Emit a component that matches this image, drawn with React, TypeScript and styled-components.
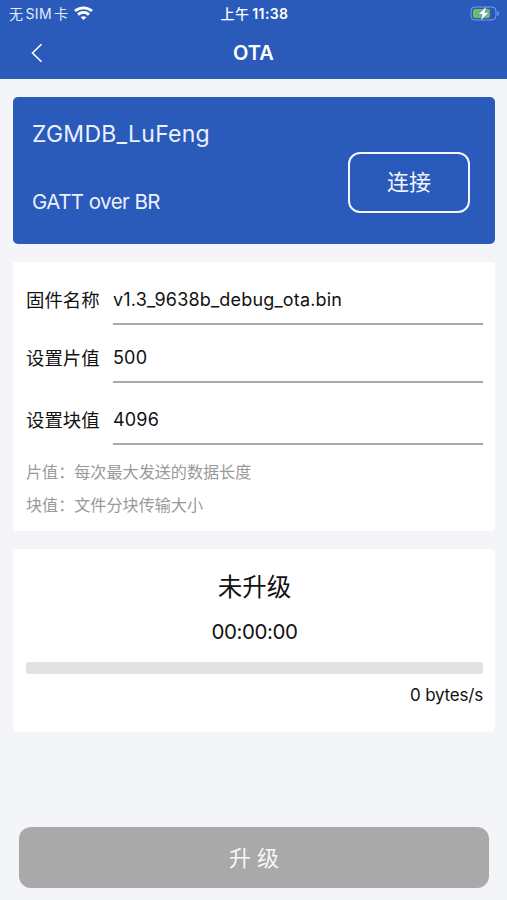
import React from "react";
import styled, { createGlobalStyle } from "styled-components";

const GlobalStyle = createGlobalStyle`
  * { box-sizing: border-box; }
  body {
    margin: 0;
    background: #f3f5f9;
    font-family: Inter, "Noto Sans CJK SC", sans-serif;
    color: #111;
  }
`;

const Screen = styled.div`
  display: flex;
  flex-direction: column;
  width: 507px;
  height: 900px;
  overflow: hidden;
  background: #f3f5f9;
`;

const Header = styled.header`
  height: 79px;
  flex: none;
  background: #2a5aba;
  color: #fff;
`;

const StatusBar = styled.div`
  display: grid;
  grid-template-columns: 1fr auto 1fr;
  align-items: center;
  height: 27px;
  padding: 0 7px 0 9px;
  font-size: 14px;
  line-height: 27px;
`;

const Carrier = styled.div`
  display: flex;
  align-items: center;
  gap: 6px;
  color: #e3ebfa;
  letter-spacing: 0.3px;
  word-spacing: -2px;
`;

const Clock = styled.div`
  font-weight: 600;
  font-size: 14px;
  letter-spacing: 0.4px;
  word-spacing: -1px;
`;

const Meridiem = styled.span`
  font-weight: 500;
`;

const BatteryIcon = styled.svg`
  justify-self: end;
`;

const NavBar = styled.nav`
  display: grid;
  grid-template-columns: 73px 1fr 73px;
  align-items: center;
  height: 52px;
`;

const BackButton = styled.button`
  display: flex;
  justify-content: center;
  padding: 0;
  border: 0;
  background: none;
  color: #fff;
`;

const Title = styled.h1`
  margin: 0;
  text-align: center;
  font-size: 20px;
  font-weight: 600;
  line-height: 52px;
`;

const Content = styled.main`
  display: flex;
  flex-direction: column;
  gap: 18px;
  padding: 18px 12px 0 13px;
`;

const DeviceCard = styled.section`
  display: flex;
  justify-content: space-between;
  align-items: flex-start;
  height: 147px;
  padding: 21px 25px 0 19px;
  border-radius: 5px;
  background: #2a5aba;
  color: #eaf1ff;
`;

const DeviceName = styled.div`
  font-size: 23px;
  line-height: 32px;
  letter-spacing: 0.25px;
`;

const DeviceLink = styled.div`
  margin-top: 36px;
  font-size: 20.5px;
  line-height: 32px;
  letter-spacing: -0.55px;
`;

const ConnectButton = styled.button`
  width: 122px;
  height: 61px;
  margin-top: 34px;
  padding: 0;
  border: 2px solid #f1f6ff;
  border-radius: 12px;
  background: none;
  color: #f1f6ff;
  font: 400 22px/57px Inter, "Noto Sans CJK SC", sans-serif;
`;

const Panel = styled.section<{ $height: number; $radius: number }>`
  height: ${(p) => p.$height}px;
  padding: 0 12px 0 13px;
  border-radius: ${(p) => p.$radius}px;
  background: #fff;
`;

const Field = styled.label<{ $height: number }>`
  display: grid;
  grid-template-columns: 87px 1fr;
  align-items: stretch;
  height: ${(p) => p.$height}px;
`;

const FieldText = styled.span`
  display: flex;
  align-items: flex-end;
  padding-bottom: 10px;
  font-size: 18.4px;
  line-height: 30px;
`;

const FieldValue = styled(FieldText)`
  border-bottom: 2px solid #a8a8a8;
  padding-bottom: 8px;
  font-size: 18px;
  letter-spacing: 0.17px;
`;

const Hint = styled.p`
  margin: 0;
  font-size: 16.1px;
  line-height: 33px;
  color: #999;
`;

const Hints = styled.div`
  padding-top: 11px;
`;

const Status = styled.h2`
  margin: 0;
  padding-top: 17px;
  text-align: center;
  font-size: 24.5px;
  font-weight: 400;
  line-height: 42px;
`;

const Elapsed = styled.div`
  margin-top: 7px;
  text-align: center;
  font-size: 20.5px;
  line-height: 34px;
  letter-spacing: -0.4px;
`;

const ProgressTrack = styled.div`
  height: 12px;
  margin-top: 13px;
  border-radius: 3px;
  background: #e1e1e1;
`;

const Speed = styled.div`
  margin-top: 8px;
  text-align: right;
  font-size: 17px;
  line-height: 26px;
  letter-spacing: -0.2px;
`;

const UpgradeButton = styled.button`
  width: 470px;
  height: 61px;
  flex: none;
  margin: 95px 0 0 19px;
  padding: 1px 0 0;
  border: 0;
  border-radius: 12px;
  background: #a9a9a9;
  color: #f7f7f7;
  font: 400 22px/61px Inter, "Noto Sans CJK SC", sans-serif;
`;

const fields = [
  { label: "固件名称", value: "v1.3_9638b_debug_ota.bin", height: 63 },
  { label: "设置片值", value: "500", height: 58 },
  { label: "设置块值", value: "4096", height: 62 },
];

export default function App() {
  return (
    <>
      <GlobalStyle />
      <Screen>
        <Header>
          <StatusBar>
            <Carrier>
              <span>无 SIM 卡</span>
              <svg width="19" height="15" viewBox="0 0 19 15" fill="none" stroke="#fff" strokeWidth="2.8">
                <path d="M1 5C5.800 .7 13.200 .7 18 5" />
                <path d="M4 8.600c3.200-2.800 7.800-2.800 11 0" />
                <path d="M6.600 11.300c1.700-1.500 4.100-1.500 5.800 0L9.500 14Z" fill="#fff" stroke="none" />
              </svg>
            </Carrier>
            <Clock>
              <Meridiem>上午</Meridiem> 11:38
            </Clock>
            <BatteryIcon width="30" height="15" viewBox="0 0 30 15">
              <rect x="1" y="1" width="25" height="13" rx="4" fill="none" stroke="#7f9fdb" />
              <path d="M27.500 5v5c2-.6 2-4.400 0-5Z" fill="#7f9fdb" />
              <rect x="3" y="3" width="17" height="9" rx="2" fill="#65c466" />
              <path d="M16.800 0 7.800 8.600h4.300L10.400 15 19.400 6.300h-4.400Z" fill="#fff" stroke="#2a5aba" strokeWidth=".5" />
            </BatteryIcon>
          </StatusBar>
          <NavBar>
            <BackButton aria-label="返回">
              <svg width="12" height="20" viewBox="0 0 12 20" fill="none" stroke="currentColor" strokeWidth="1.6">
                <path d="M10.500 1.200 1.500 10l9 8.800" />
              </svg>
            </BackButton>
            <Title>OTA</Title>
          </NavBar>
        </Header>
        <Content>
          <DeviceCard>
            <div>
              <DeviceName>ZGMDB_LuFeng</DeviceName>
              <DeviceLink>GATT over BR</DeviceLink>
            </div>
            <ConnectButton>连接</ConnectButton>
          </DeviceCard>
          <Panel $height={269} $radius={2}>
            {fields.map((f) => (
              <Field key={f.label} $height={f.height}>
                <FieldText>{f.label}</FieldText>
                <FieldValue>{f.value}</FieldValue>
              </Field>
            ))}
            <Hints>
              <Hint>片值：每次最大发送的数据长度</Hint>
              <Hint>块值：文件分块传输大小</Hint>
            </Hints>
          </Panel>
          <Panel $height={183} $radius={5}>
            <Status>未升级</Status>
            <Elapsed>00:00:00</Elapsed>
            <ProgressTrack />
            <Speed>0 bytes/s</Speed>
          </Panel>
        </Content>
        <UpgradeButton>升 级</UpgradeButton>
      </Screen>
    </>
  );
}
